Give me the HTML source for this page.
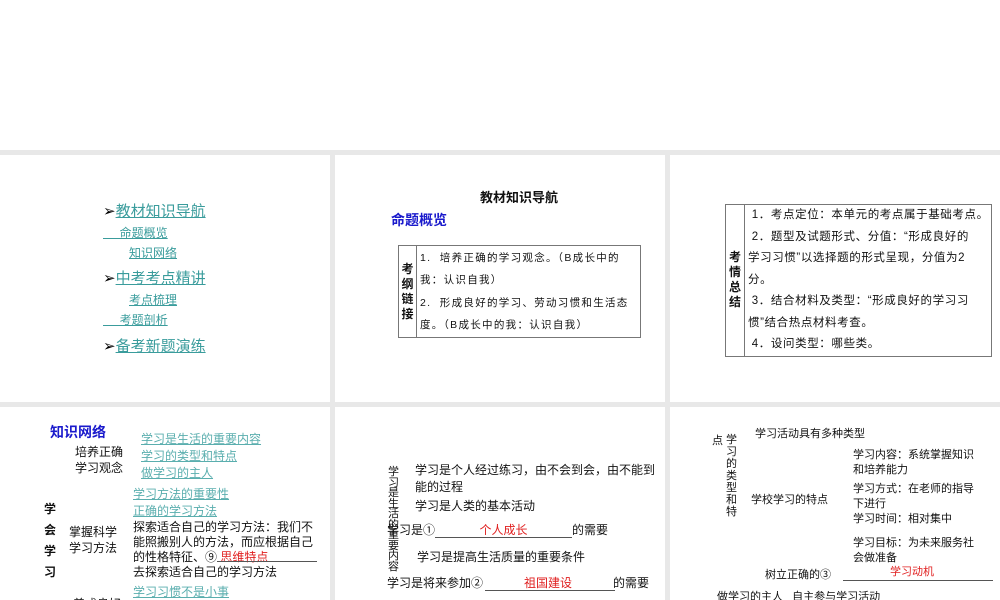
<!DOCTYPE html>
<html><head><meta charset="utf-8"><style>
*{margin:0;padding:0;box-sizing:border-box}
body{width:1000px;height:600px;overflow:hidden;background:#fff;position:relative;font-family:"Liberation Sans","Noto Sans CJK SC",sans-serif;color:#111}
.bg{position:absolute;left:0;top:150px;width:1000px;height:450px;background:#e8e8e8}
.s{position:absolute;background:#fff;overflow:hidden}
.t{position:absolute;white-space:nowrap;line-height:1}
.l{color:#3a9c9c;text-decoration:underline}
.b{color:#1a1acc;font-weight:bold}
.r{color:#e02020}
.f12{font-size:12px}.f11{font-size:11px}
.v{position:absolute;font-size:11px;line-height:11px;width:12px;white-space:normal;word-break:break-all}
table{border-collapse:collapse}
td{border:1px solid #777;vertical-align:middle}
.u{position:absolute;border-bottom:1px solid #555}
</style></head><body>
<div class="bg"></div>

<div class="s" style="left:0;top:155px;width:330px;height:247px">
<div class="t l" style="left:103px;top:49px;font-size:15px"><span style="color:#000;text-decoration:none;display:inline-block">➢</span>教材知识导航</div>
<div class="t l f12" style="left:103px;top:72px">&nbsp;&nbsp;&nbsp;&nbsp;&nbsp;命题概览</div>
<div class="t l f12" style="left:129px;top:92px">知识网络</div>
<div class="t l" style="left:103px;top:116px;font-size:15px"><span style="color:#000;display:inline-block">➢</span>中考考点精讲</div>
<div class="t l f12" style="left:129px;top:139px">考点梳理</div>
<div class="t l f12" style="left:103px;top:159px">&nbsp;&nbsp;&nbsp;&nbsp;&nbsp;考题剖析</div>
<div class="t l" style="left:103px;top:184px;font-size:15px"><span style="color:#000;display:inline-block">➢</span>备考新题演练</div>
</div>

<div class="s" style="left:335px;top:155px;width:330px;height:247px">
<div class="t" style="left:145px;top:36px;font-size:13px;font-weight:bold">教材知识导航</div>
<div class="t b" style="left:56px;top:58px;font-size:14px">命题概览</div>
<table style="position:absolute;left:63px;top:90px;width:243px;height:93px;font-size:10.5px;letter-spacing:1.3px">
<tr><td style="width:18px;font-weight:bold;font-size:12px;line-height:15px;text-align:center;letter-spacing:0">考纲链接</td>
<td style="padding-left:3px;line-height:22.5px">1.&nbsp; 培养正确的学习观念。（B成长中的我：认识自我）<br>2.&nbsp; 形成良好的学习、劳动习惯和生活态度。（B成长中的我：认识自我）</td></tr></table>
</div>

<div class="s" style="left:670px;top:155px;width:330px;height:247px">
<table style="position:absolute;left:55px;top:49px;width:267px;height:152px;font-size:11.5px;letter-spacing:0.6px">
<tr><td style="width:19px;font-weight:bold;font-size:12px;line-height:15px;text-align:center;letter-spacing:0">考情总结</td>
<td style="padding-left:3px;line-height:21.5px;white-space:nowrap">&nbsp;1．考点定位：本单元的考点属于基础考点。<br>&nbsp;2．题型及试题形式、分值：“形成良好的<br>学习习惯”以选择题的形式呈现，分值为2<br>分。<br>&nbsp;3．结合材料及类型：“形成良好的学习习<br>惯”结合热点材料考查。<br>&nbsp;4．设问类型：哪些类。</td></tr></table>
</div>

<div class="s" style="left:0;top:407px;width:330px;height:193px">
<div class="t b" style="left:50px;top:18px;font-size:14px">知识网络</div>
<div class="t f12" style="left:75px;top:37px;line-height:16px">培养正确<br>学习观念</div>
<div class="t l f12" style="left:141px;top:24px;line-height:17px;color:#5aaeae">学习是生活的重要内容<br>学习的类型和特点<br>做学习的主人</div>
<div class="t l f12" style="left:133px;top:79px;line-height:16.5px;color:#5aaeae">学习方法的重要性<br>正确的学习方法</div>
<div class="t f12" style="left:44px;top:92px;line-height:21px;font-weight:bold">学<br>会<br>学<br>习</div>
<div class="t f12" style="left:69px;top:117px;line-height:16px">掌握科学<br>学习方法</div>
<div class="t f12" style="left:133px;top:113px;line-height:15px">探索适合自己的学习方法：我们不<br>能照搬别人的方法，而应根据自己<br>的性格特征、⑨ <span class="r">思维特点</span><br>去探索适合自己的学习方法</div>
<div class="u" style="left:217px;top:154px;width:100px"></div>
<div class="t l f12" style="left:133px;top:179px;color:#5aaeae">学习习惯不是小事</div>
<div class="t f12" style="left:73px;top:191px">养成良好</div>
</div>

<div class="s" style="left:335px;top:407px;width:330px;height:193px">
<div class="v" style="left:53px;top:60px;line-height:10.5px">学习是生活的重要内容</div>
<div class="t f12" style="left:80px;top:55px;line-height:17px">学习是个人经过练习，由不会到会，由不能到<br>能的过程</div>
<div class="t f12" style="left:80px;top:93px">学习是人类的基本活动</div>
<div class="t f12" style="left:52px;top:117px">学习是①<span style="display:inline-block;width:137px;text-align:center" class="r">个人成长</span>的需要</div>
<div class="u" style="left:100px;top:130px;width:137px"></div>
<div class="t f12" style="left:82px;top:144px">学习是提高生活质量的重要条件</div>
<div class="t f12" style="left:52px;top:170px">学习是将来参加②<span style="display:inline-block;width:130px;text-align:center" class="r">祖国建设</span>的需要</div>
<div class="u" style="left:150px;top:183px;width:130px"></div>
</div>

<div class="s" style="left:670px;top:407px;width:330px;height:193px">
<div class="t f11" style="left:42px;top:29px">点</div>
<div class="v" style="left:56px;top:27px;line-height:12px">学习的类型和特</div>
<div class="t f11" style="left:85px;top:22px">学习活动具有多种类型</div>
<div class="t f11" style="left:183px;top:41px;line-height:15px">学习内容：系统掌握知识<br>和培养能力</div>
<div class="t f11" style="left:183px;top:75px;line-height:15px">学习方式：在老师的指导<br>下进行<br>学习时间：相对集中</div>
<div class="t f11" style="left:81px;top:88px">学校学习的特点</div>
<div class="t f11" style="left:183px;top:129px;line-height:15px">学习目标：为未来服务社<br>会做准备</div>
<div class="t f11" style="left:95px;top:163px">树立正确的③</div>
<div class="t f11 r" style="left:220px;top:160px">学习动机</div>
<div class="u" style="left:173px;top:173px;width:150px"></div>
<div class="t f11" style="left:47px;top:185px">做学习的主人&nbsp;&nbsp;&nbsp;自主参与学习活动</div>
</div>
</body></html>
